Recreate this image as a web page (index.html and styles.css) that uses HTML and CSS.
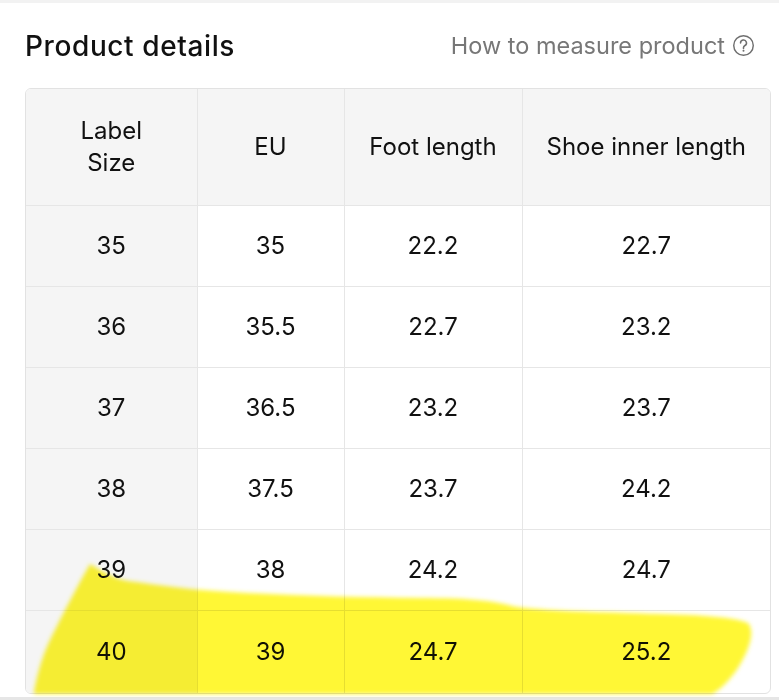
FILE: index.html
```html
<!DOCTYPE html>
<html lang="en">
<head>
<meta charset="utf-8">
<title>Product details</title>
<link rel="stylesheet" href="styles.css">
</head>
<body>
<div class="topbar"></div>
<section class="details">
  <header class="details-head">
    <h2 class="details-title">Product details</h2>
    <a class="measure-link" href="#">How to measure product
      <svg class="help-icon" viewBox="0 0 24 24" width="23" height="23" aria-hidden="true">
        <circle cx="12" cy="12" r="10.2" fill="none" stroke="#6f6f6f" stroke-width="1.5"/>
        <path d="M8.9 9.3a3.1 3.1 0 1 1 4.6 2.7c-.9.5-1.5 1.1-1.5 2.1v.9" fill="none" stroke="#6f6f6f" stroke-width="1.6" stroke-linecap="round"/>
        <circle cx="12" cy="17.6" r="1.05" fill="#6f6f6f"/>
      </svg>
    </a>
  </header>
  <div class="table-wrap">
    <table class="size-table">
      <colgroup>
        <col class="c1"><col class="c2"><col class="c3"><col class="c4">
      </colgroup>
      <thead>
        <tr><th>Label<br>Size</th><th>EU</th><th>Foot length</th><th>Shoe inner length</th></tr>
      </thead>
      <tbody>
        <tr><td>35</td><td>35</td><td>22.2</td><td>22.7</td></tr>
        <tr><td>36</td><td>35.5</td><td>22.7</td><td>23.2</td></tr>
        <tr><td>37</td><td>36.5</td><td>23.2</td><td>23.7</td></tr>
        <tr><td>38</td><td>37.5</td><td>23.7</td><td>24.2</td></tr>
        <tr><td>39</td><td>38</td><td>24.2</td><td>24.7</td></tr>
        <tr class="last"><td>40</td><td>39</td><td>24.7</td><td>25.2</td></tr>
      </tbody>
    </table>
  </div>
</section>
<div class="bottombar"></div>
<svg class="highlight" width="779" height="700" viewBox="0 0 779 700" aria-hidden="true">
  <defs>
    <filter id="soft" x="-5%" y="-20%" width="110%" height="140%">
      <feGaussianBlur stdDeviation="2.2"/>
    </filter>
  </defs>
  <path filter="url(#soft)" fill="#fff736" d="M34 692 C38 670 44 650 56 628 C66 608 78 585 90 564 C100 570 112 578 128 581 C160 585 190 590 230 592 C300 596 360 597 420 598 C470 598 495 601 512 606 C540 611 600 612 660 614 C700 615 735 617 748 623 C756 632 748 652 738 668 C730 680 720 690 712 694 L34 694 Z"/>
</svg>
</body>
</html>
```

FILE: styles.css
```css
* { box-sizing: border-box; }
html, body { margin: 0; padding: 0; background: #fff; }
body {
  width: 779px;
  height: 700px;
  overflow: hidden;
  position: relative;
  font-family: Inter, "Noto Sans", "Liberation Sans", sans-serif;
  color: #111;
}
.topbar { height: 3px; background: #f2f2f2; }
.details { padding: 0 8px 0 25px; }
.details-head {
  height: 85px;
  display: flex;
  align-items: center;
  justify-content: space-between;
  padding-right: 16px;
}
.details-title {
  margin: 0;
  font-size: 28px;
  font-weight: 500;
  letter-spacing: 0.6px;
  color: #111;
}
.measure-link {
  display: flex;
  align-items: center;
  gap: 7px;
  color: #777;
  text-decoration: none;
  font-size: 23.5px;
  letter-spacing: 0;
}
.help-icon { display: block; }
.table-wrap {
  width: 746px;
  border: 1px solid #e2e2e2;
  border-radius: 6px;
  overflow: hidden;
}
.size-table {
  width: 100%;
  border-collapse: collapse;
  table-layout: fixed;
  font-size: 24px;
}
.c1 { width: 171px; }
.c2 { width: 147px; }
.c3 { width: 178px; }
.c4 { width: auto; }
.size-table th, .size-table td {
  text-align: center;
  vertical-align: middle;
  border-right: 1px solid #e6e6e6;
  border-bottom: 1px solid #e6e6e6;
  padding: 0;
}
.size-table th:last-child, .size-table td:last-child { border-right: 0; }
.size-table th {
  height: 116px;
  background: #f5f5f5;
  font-weight: 400;
  line-height: 32px;
}
.size-table td { height: 81px; }
.size-table td:first-child { background: #f5f5f5; }
.size-table tr.last td { height: 83px; border-bottom: 0; }
.bottombar {
  position: absolute;
  left: 0; right: 0; bottom: 0;
  height: 3px;
  background: #e6e6e6;
}
.highlight {
  position: absolute;
  left: 0; top: 0;
  mix-blend-mode: multiply;
  pointer-events: none;
}
```
